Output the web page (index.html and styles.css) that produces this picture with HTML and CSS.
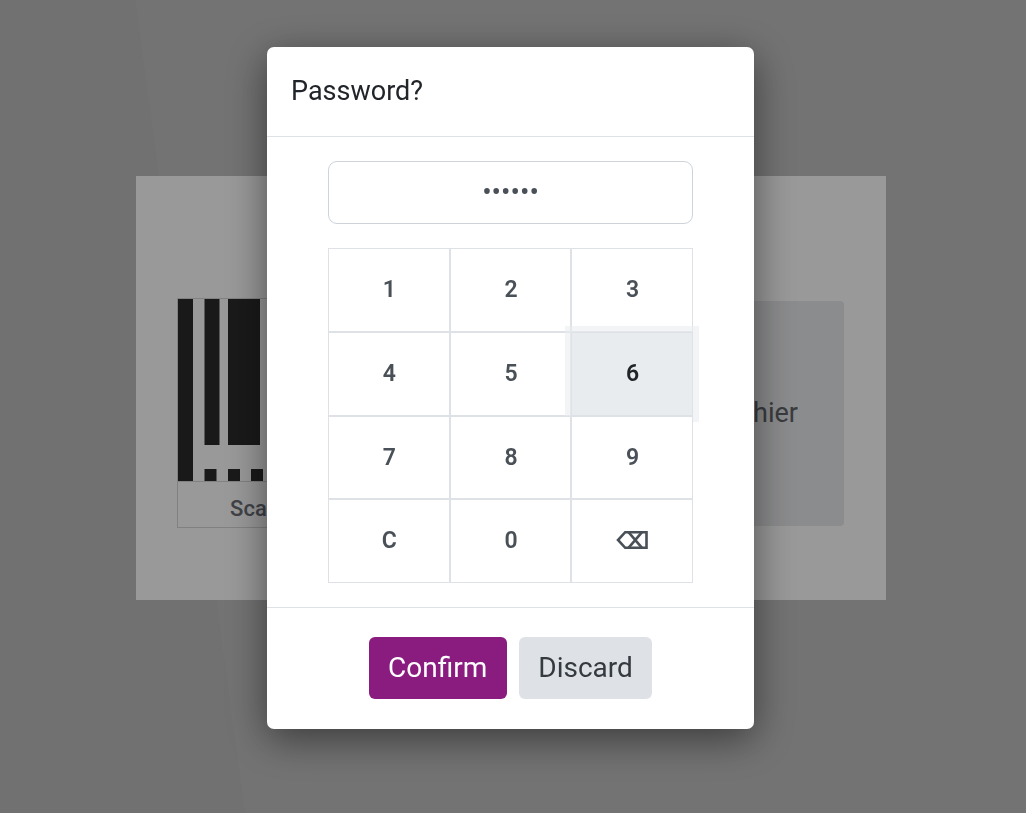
FILE: index.html
```html
<!DOCTYPE html>
<html lang="en">
<head>
<meta charset="utf-8">
<title>Password?</title>
<link rel="stylesheet" href="styles.css">
</head>
<body>
<main class="screen">
  <section class="login-card">
    <div class="panel scan">
      <svg class="barcode" viewBox="0 0 256 183" width="256" height="183" aria-hidden="true">
        <rect x="1" y="1" width="15" height="182"/>
        <rect x="27.5" y="1" width="15" height="146"/>
        <rect x="51" y="1" width="32" height="146"/>
        <rect x="27.5" y="171" width="12" height="12"/>
        <rect x="51" y="171" width="12" height="12"/>
        <rect x="74" y="171" width="12" height="12"/>
        <rect x="98" y="1" width="15" height="146"/>
        <rect x="124" y="1" width="32" height="146"/>
      </svg>
      <div class="scan-label">Scan your badge</div>
    </div>
    <div class="panel cashier">Select Cashier</div>
  </section>
</main>
<div class="overlay">
  <div class="modal">
    <header class="modal-header">Password?</header>
    <div class="modal-body">
      <input class="pin" type="password" value="123456" readonly>
      <div class="keypad">
        <button class="key">1</button>
        <button class="key">2</button>
        <button class="key">3</button>
        <button class="key">4</button>
        <button class="key">5</button>
        <button class="key active">6</button>
        <button class="key">7</button>
        <button class="key">8</button>
        <button class="key">9</button>
        <button class="key">C</button>
        <button class="key">0</button>
        <button class="key erase" aria-label="Backspace">
          <svg class="erase-icon" viewBox="0 0 32 20" width="32" height="20" aria-hidden="true">
            <path d="M30.5 2.2H9.2L2 10l7.2 7.8h21.3z"/>
            <path d="M12.5 2.2l13.5 15.6M26 2.2L12.5 17.8"/>
          </svg>
        </button>
      </div>
    </div>
    <footer class="modal-footer">
      <button class="btn primary">Confirm</button>
      <button class="btn secondary">Discard</button>
    </footer>
  </div>
</div>
</body>
</html>
```
FILE: styles.css
```css
* { box-sizing: border-box; }
html, body { margin: 0; height: 100%; }
body {
  font-family: Roboto, "Liberation Sans", sans-serif;
  color: #343a40;
  overflow: hidden;
  background: linear-gradient(82.3deg, #bdbdbd 0, #bdbdbd 21.6%, #c0c0c0 21.6%, #c0c0c0 100%);
}
.screen {
  width: 1022px;
  height: 813px;
  padding-top: 176px;
  display: flex;
  justify-content: center;
  align-items: flex-start;
}
.login-card {
  width: 750px;
  height: 424px;
  background: #fff;
  padding: 122px 42px 0 41px;
  display: flex;
  justify-content: space-between;
  align-items: flex-start;
}
.panel { width: 256px; }
.scan {
  height: 230px;
  border: 1px solid #d8d8d8;
  display: flex;
  flex-direction: column;
}
.barcode { display: block; margin: -1px 0 0 -1px; flex: none; }
.barcode rect { fill: #2b2b2b; }
.scan-label {
  flex: 1;
  text-align: center;
  font-size: 22px;
  font-weight: 500;
  color: #6a6e77;
  padding: 14px 0 0 14px;
  border-top: 1px solid #d8d8d8;
}
.cashier {
  height: 225px;
  margin-top: 3px;
  background: #e8e9eb;
  border-radius: 4px;
  font-size: 27px;
  color: #5f6368;
  display: flex;
  align-items: center;
  justify-content: center;
  padding: 0 8px 2px 0;
}
.overlay {
  position: fixed;
  inset: 0;
  background: rgba(0, 0, 0, .4);
  padding: 47px 5px 0 0;
  display: flex;
  justify-content: center;
  align-items: flex-start;
}
.modal {
  width: 487px;
  height: 682px;
  background: #fff;
  border-radius: 7px;
  box-shadow: 0 10px 40px rgba(0, 0, 0, .5);
  display: flex;
  flex-direction: column;
}
.modal-header {
  height: 90px;
  padding: 28px 24px 0;
  font-size: 27px;
  line-height: 33px;
  color: #212529;
  border-bottom: 1px solid #dee2e6;
}
.modal-body {
  flex: none;
  padding: 24px 61px;
  display: flex;
  flex-direction: column;
  gap: 24px;
  border-bottom: 1px solid #dee2e6;
}
.pin {
  width: 365px;
  height: 63px;
  border: 1px solid #ced4da;
  border-radius: 9px;
  background: #fff;
  color: #495057;
  font: 400 28px Roboto, sans-serif;
  text-align: center;
  outline: none;
  padding: 0 0 2px;
}
.keypad {
  width: 365px;
  height: 335px;
  display: grid;
  grid-template-columns: repeat(3, 1fr);
  grid-template-rows: repeat(4, 1fr);
}
.key {
  border: 1px solid #dee2e6;
  background: #fff;
  color: #495057;
  font: 600 23px Roboto, sans-serif;
  padding: 0 0 .5px 1px;
}
.key.active {
  background: #e9ecef;
  color: #212529;
  box-shadow: 0 0 0 6px rgba(233, 236, 239, .6);
}
.erase { display: flex; align-items: center; justify-content: center; padding: 0 0 2px 0; }
.erase-icon { display: block; fill: none; stroke: #495057; stroke-width: 2.6; }
.modal-footer {
  flex: 1;
  padding-top: 29px;
  display: flex;
  justify-content: center;
  align-items: flex-start;
  gap: 12px;
}
.btn {
  height: 62px;
  border: 0;
  border-radius: 6px;
  font: 400 28px Roboto, sans-serif;
  padding: 0 19.5px 2px;
}
.primary { background: #8a1c80; color: #fff; }
.secondary { background: #dee2e6; color: #343a40; }
```
